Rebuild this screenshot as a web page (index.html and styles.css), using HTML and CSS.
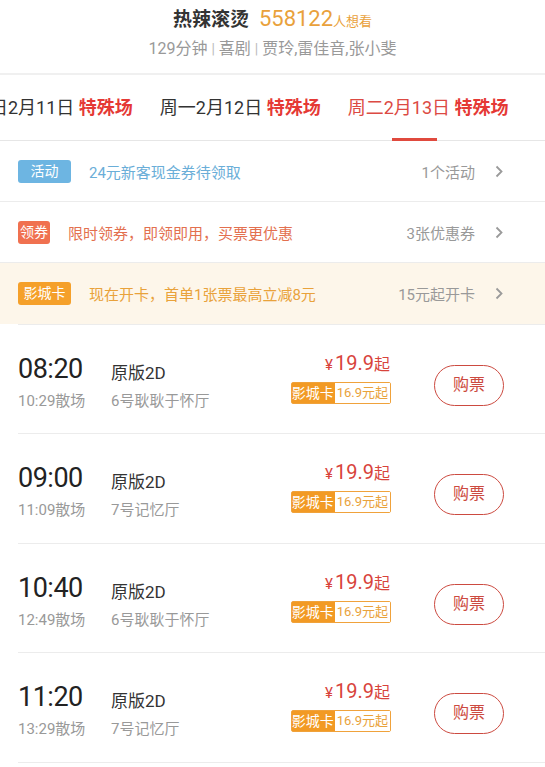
FILE: index.html
```html
<!DOCTYPE html>
<html>
<head>
<meta charset="utf-8">
<link rel="stylesheet" href="styles.css">
</head>
<body>

<div class="movie">
    <div class="movie-title"><b>热辣滚烫</b><span class="wish">558122</span><span class="wish-unit">人想看</span></div>
    <div class="movie-info">129分钟 <i>|</i> 喜剧 <i>|</i> 贾玲,雷佳音,张小斐</div>
</div>

<div class="tabs">
    <div class="tab">周日2月11日 <b>特殊场</b></div>
    <div class="tab">周一2月12日 <b>特殊场</b></div>
    <div class="tab active">周二2月13日 <b>特殊场</b></div>
</div>

<div class="promo">
    <span class="tag blue">活动</span>
    <span class="promo-text blue-text">24元新客现金券待领取</span>
    <span class="promo-more">1个活动</span>
    <svg class="arrow" width="8" height="13" viewBox="0 0 8 13"><polyline points="1.5,1.5 6.5,6.5 1.5,11.5" fill="none" stroke="#9a9a9a" stroke-width="1.8"/></svg>
</div>
<div class="promo">
    <span class="tag red short">领券</span>
    <span class="promo-text red-text">限时领券，即领即用，买票更优惠</span>
    <span class="promo-more">3张优惠券</span>
    <svg class="arrow" width="8" height="13" viewBox="0 0 8 13"><polyline points="1.5,1.5 6.5,6.5 1.5,11.5" fill="none" stroke="#9a9a9a" stroke-width="1.8"/></svg>
</div>
<div class="promo card">
    <span class="tag orange">影城卡</span>
    <span class="promo-text orange-text">现在开卡，首单1张票最高立减8元</span>
    <span class="promo-more">15元起开卡</span>
    <svg class="arrow" width="8" height="13" viewBox="0 0 8 13"><polyline points="1.5,1.5 6.5,6.5 1.5,11.5" fill="none" stroke="#9a9a9a" stroke-width="1.8"/></svg>
</div>

<div class="shows">
    <div class="show">
        <div class="show-time">
            <div class="start">08:20</div>
            <div class="end">10:29散场</div>
        </div>
        <div class="show-hall">
            <div class="lang">原版2D</div>
            <div class="hall">6号耿耿于怀厅</div>
        </div>
        <div class="show-price">
            <div class="price"><span class="yen">¥</span>19.9<span class="qi">起</span></div>
            <div class="vip"><span class="vip-l">影城卡</span><span class="vip-r">16.9元起</span></div>
        </div>
        <div class="buy">购票</div>
    </div>
    <div class="show">
        <div class="show-time">
            <div class="start">09:00</div>
            <div class="end">11:09散场</div>
        </div>
        <div class="show-hall">
            <div class="lang">原版2D</div>
            <div class="hall">7号记忆厅</div>
        </div>
        <div class="show-price">
            <div class="price"><span class="yen">¥</span>19.9<span class="qi">起</span></div>
            <div class="vip"><span class="vip-l">影城卡</span><span class="vip-r">16.9元起</span></div>
        </div>
        <div class="buy">购票</div>
    </div>
    <div class="show">
        <div class="show-time">
            <div class="start">10:40</div>
            <div class="end">12:49散场</div>
        </div>
        <div class="show-hall">
            <div class="lang">原版2D</div>
            <div class="hall">6号耿耿于怀厅</div>
        </div>
        <div class="show-price">
            <div class="price"><span class="yen">¥</span>19.9<span class="qi">起</span></div>
            <div class="vip"><span class="vip-l">影城卡</span><span class="vip-r">16.9元起</span></div>
        </div>
        <div class="buy">购票</div>
    </div>
    <div class="show">
        <div class="show-time">
            <div class="start">11:20</div>
            <div class="end">13:29散场</div>
        </div>
        <div class="show-hall">
            <div class="lang">原版2D</div>
            <div class="hall">7号记忆厅</div>
        </div>
        <div class="show-price">
            <div class="price"><span class="yen">¥</span>19.9<span class="qi">起</span></div>
            <div class="vip"><span class="vip-l">影城卡</span><span class="vip-r">16.9元起</span></div>
        </div>
        <div class="buy">购票</div>
    </div>
</div>

</body>
</html>
```

FILE: styles.css
```css
body {
    margin: 0;
    width: 545px;
    overflow: hidden;
    background: #fff;
    color: #333;
    font-family: Roboto, "Noto Sans CJK SC", sans-serif;
}

/* movie header */
.movie { height: 73px; border-bottom: 2px solid #f0f0f0; text-align: center; }
.movie-title { padding-top: 5px; height: 28px; line-height: 28px; }
.movie-title b { font-size: 19px; font-weight: bold; color: #333; margin-right: 10px; }
.wish { font-size: 22px; color: #e9a13b; }
.wish-unit { font-size: 13px; color: #e9a13b; }
.movie-info { margin-top: 6px; font-size: 16px; color: #999; line-height: 20px; }
.movie-info i { font-style: normal; color: #bbb; font-size: 14px; }

/* date tabs */
.tabs { display: flex; height: 65px; border-bottom: 1px solid #e6e6e6; margin-left: -28px; white-space: nowrap; }
.tab { font-size: 18px; line-height: 65px; margin-right: 27px; color: #333; position: relative; }
.tab b { color: #e53935; font-weight: bold; }
.tab.active { color: #dc4a43; }
.tab.active::after { content: ""; position: absolute; left: 44px; bottom: -1px; width: 45px; height: 3px; background: #e04a3e; }

/* promo rows */
.promo { display: flex; align-items: center; height: 60px; border-bottom: 1px solid #ececec; padding: 0 42px 0 18px; }
.promo.card { background: #fdf6ea; border-bottom: none; height: 61px; }
.tag { width: 53px; height: 23px; line-height: 23px; border-radius: 3px; color: #fff; font-size: 14px; text-align: center; margin-right: 18px; }
.tag.short { width: 32px; }
.tag.blue { background: #6db5e2; }
.tag.red { background: #f07150; }
.tag.orange { background: #f5a02a; }
.promo-text { flex: 1; font-size: 15px; }
.blue-text { color: #6aaed8; }
.red-text { color: #e3704f; }
.orange-text { color: #e9a23b; }
.promo-more { font-size: 15px; color: #999; }
.arrow { display: block; margin-left: 20px; }

/* show list */
.shows { padding-left: 18px; }
.show { display: flex; align-items: flex-start; box-sizing: border-box; height: 109.5px; padding-top: 26px; border-bottom: 1px solid #ececec; }
.show:first-child { border-top: 1px solid #ececec; height: 110px; }
.show-time { width: 93px; margin-top: 2px; }
.start { font-size: 27px; line-height: 32px; color: #222; letter-spacing: -0.5px; }
.end { font-size: 15px; color: #999; line-height: 20px; margin-top: 6px; }
.show-hall { flex: 1; margin-top: 11px; }
.lang { font-size: 17px; color: #333; line-height: 22px; }
.hall { font-size: 15px; color: #999; line-height: 20px; margin-top: 7px; }
.show-price { display: flex; flex-direction: column; align-items: flex-end; margin-right: 43px; }
.price { color: #d8443c; font-size: 20px; line-height: 24px; margin-right: 1px; }
.yen { font-size: 15px; margin-right: 2px; }
.qi { font-size: 16px; }
.vip { display: flex; margin-top: 5px; height: 22px; box-sizing: border-box; border: 1px solid #f0a23b; border-radius: 2px; line-height: 20px; }
.vip-l { background: #f29a24; color: #fff; font-size: 14px; padding: 0 1px 0 0; }
.vip-r { color: #e9a23b; background: #fff; font-size: 13px; padding: 0 2px; }
.buy { margin-top: 14px; width: 70px; height: 41px; box-sizing: border-box; line-height: 38px; border: 1.6px solid #cc4a40; border-radius: 21px; color: #cc4a40; font-size: 16px; text-align: center; margin-right: 41px; }
```
